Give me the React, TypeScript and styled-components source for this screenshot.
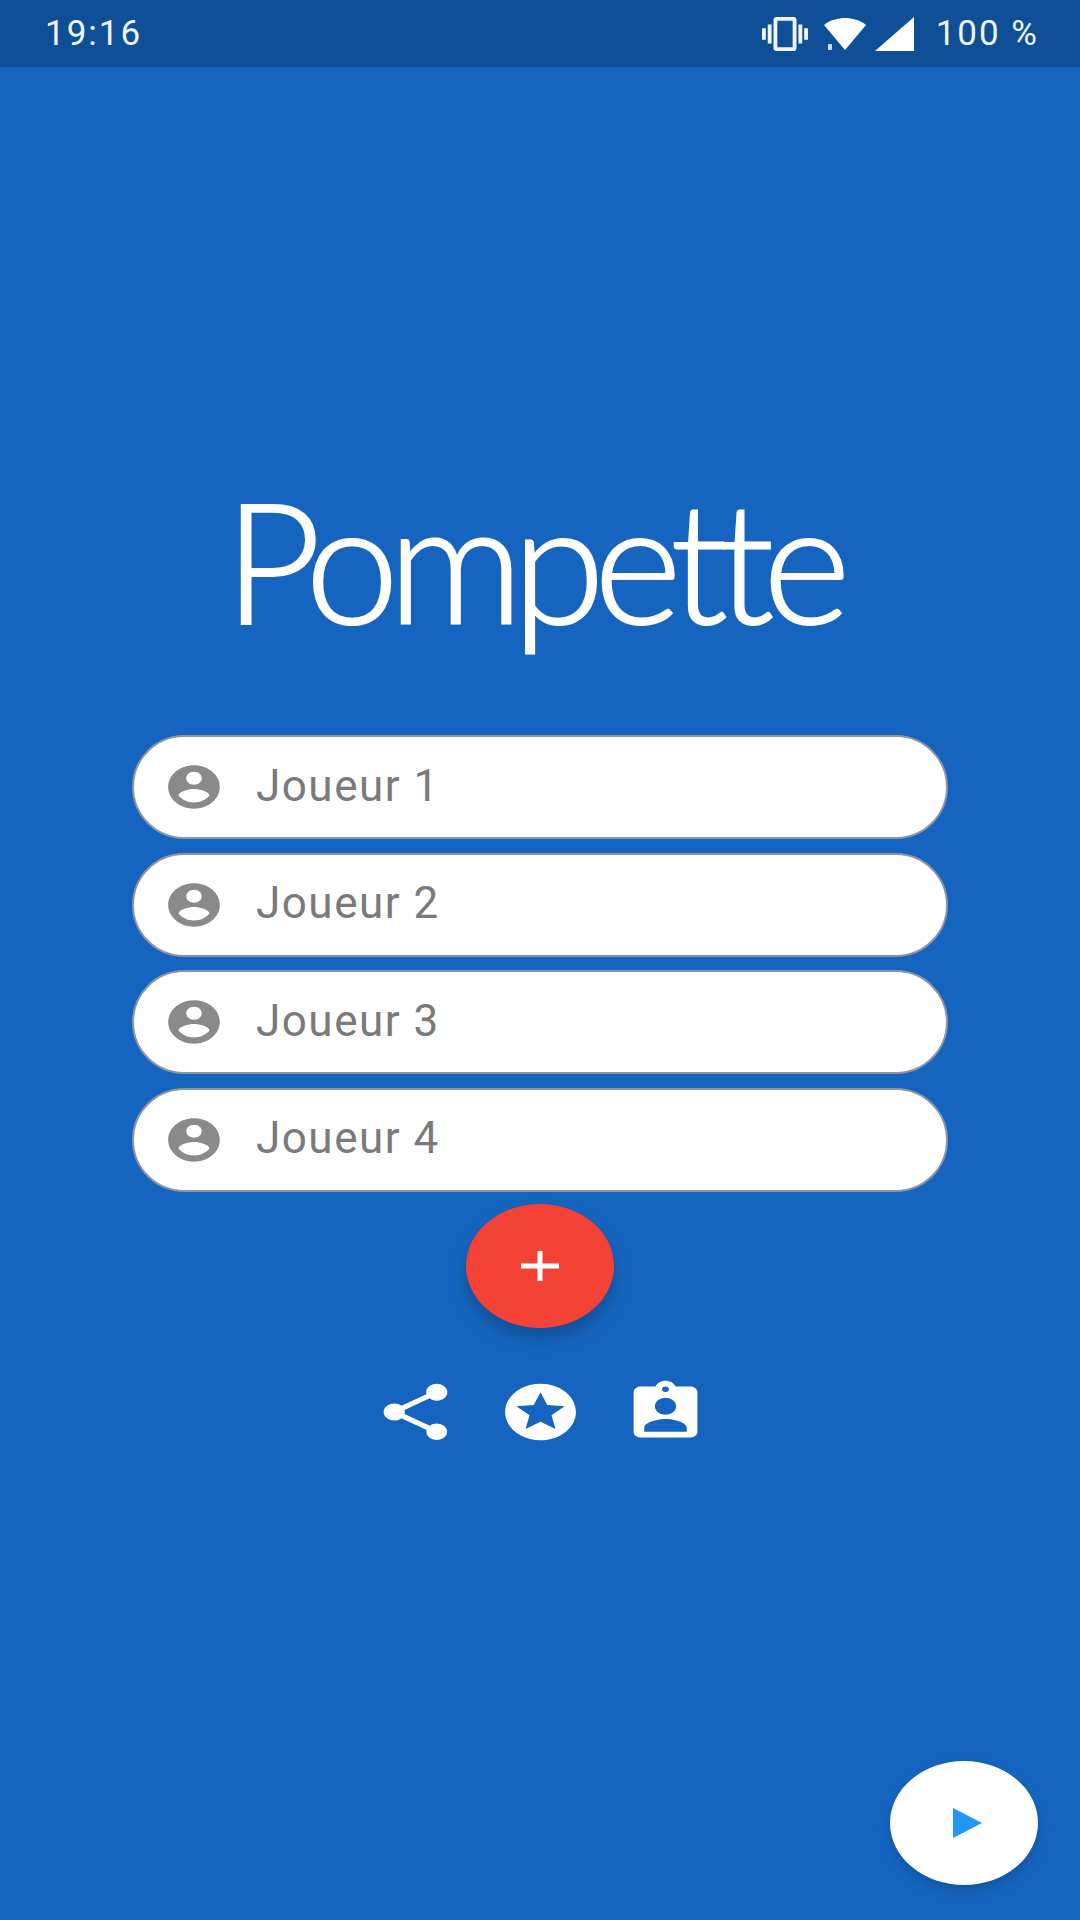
import React from 'react';
import styled, { createGlobalStyle } from 'styled-components';

const GlobalStyle = createGlobalStyle`
  html, body {
    margin: 0;
    padding: 0;
    background: #1565c0;
  }
`;

const players = ['Joueur 1', 'Joueur 2', 'Joueur 3', 'Joueur 4'];

const App = () => (
  <Screen>
    <GlobalStyle />
    <StatusBar>
      <Clock>19:16</Clock>
      <StatusIcons>
        <VibrateIcon viewBox="0 3 24 18" preserveAspectRatio="none">
          <path d="M0 15h2V9H0v6zm3 2h2V7H3v10zm19-8v6h2V9h-2zm-3 8h2V7h-2v10zM16.5 3h-9C6.67 3 6 3.67 6 4.5v15c0 .83.67 1.5 1.5 1.5h9c.83 0 1.5-.67 1.5-1.5v-15c0-.83-.67-1.5-1.5-1.5zM16 19H8V5h8v14z" />
        </VibrateIcon>
        <WifiIcon viewBox="0 0 44 34">
          <path d="M22 33 L1 8 C7 3 15 1 22 1 C29 1 37 3 43 8 Z" />
          <rect x="5" y="27" width="4" height="6" rx="1" fill="#cfe0f2" />
        </WifiIcon>
        <SignalIcon viewBox="0 0 39 34">
          <path d="M39 0 V34 H0 Z" />
        </SignalIcon>
        <Battery>100 %</Battery>
      </StatusIcons>
    </StatusBar>

    <Title>Pompette</Title>

    <PlayerList>
      {players.map((name) => (
        <PlayerField key={name}>
          <AvatarIcon viewBox="0 0 24 24" preserveAspectRatio="none">
            <path d="M12 2C6.48 2 2 6.48 2 12s4.48 10 10 10 10-4.48 10-10S17.52 2 12 2zm0 3c1.66 0 3 1.34 3 3s-1.34 3-3 3-3-1.34-3-3 1.34-3 3-3zm0 14.2c-2.5 0-4.71-1.28-6-3.22.03-1.99 4-3.08 6-3.08 1.99 0 5.97 1.09 6 3.08-1.29 1.94-3.5 3.22-6 3.22z" />
          </AvatarIcon>
          <PlayerName>{name}</PlayerName>
        </PlayerField>
      ))}
    </PlayerList>

    <AddButton>
      <svg width="38" height="30" viewBox="0 0 38 30">
        <path d="M0 15H38M19 0V30" stroke="#fff" strokeWidth="5" fill="none" />
      </svg>
    </AddButton>

    <ActionRow>
      <ActionIcon viewBox="0 0 24 24" preserveAspectRatio="none">
        <path d="M18 16.08c-.76 0-1.44.3-1.96.77L8.91 12.7c.05-.23.09-.46.09-.7s-.04-.47-.09-.7l7.05-4.11c.54.5 1.25.81 2.04.81 1.66 0 3-1.34 3-3s-1.34-3-3-3-3 1.34-3 3c0 .24.04.47.09.7L8.04 9.81C7.5 9.31 6.79 9 6 9c-1.66 0-3 1.34-3 3s1.34 3 3 3c.79 0 1.5-.31 2.04-.81l7.12 4.16c-.05.21-.08.43-.08.65 0 1.61 1.31 2.92 2.92 2.92 1.61 0 2.92-1.31 2.92-2.92s-1.31-2.92-2.92-2.92z" />
      </ActionIcon>
      <ActionIcon viewBox="0 0 24 24" preserveAspectRatio="none">
        <path d="M11.99 2C6.47 2 2 6.48 2 12s4.47 10 9.99 10C17.52 22 22 17.52 22 12S17.52 2 11.99 2zm4.24 16L12 15.45 7.77 18l1.12-4.81-3.73-3.23 4.92-.42L12 5l1.92 4.53 4.92.42-3.73 3.23L16.23 18z" />
      </ActionIcon>
      <ActionIcon viewBox="0 0 24 24" preserveAspectRatio="none">
        <path d="M19 3h-4.18C14.4 1.84 13.3 1 12 1c-1.3 0-2.4.84-2.82 2H5c-1.1 0-2 .9-2 2v14c0 1.1.9 2 2 2h14c1.1 0 2-.9 2-2V5c0-1.1-.9-2-2-2zm-7 0c.55 0 1 .45 1 1s-.45 1-1 1-1-.45-1-1 .45-1 1-1zm0 4c1.66 0 3 1.34 3 3s-1.34 3-3 3-3-1.34-3-3 1.34-3 3-3zm6 12H6v-1.4c0-2 4-3.1 6-3.1s6 1.1 6 3.1V19z" />
      </ActionIcon>
    </ActionRow>

    <PlayButton>
      <svg width="29" height="30" viewBox="0 0 29 30">
        <path d="M0 0L29 15L0 30Z" fill="#2196f3" />
      </svg>
    </PlayButton>
  </Screen>
);

const Screen = styled.div`
  width: 1080px;
  height: 1920px;
  display: flex;
  flex-direction: column;
  align-items: center;
  background: #1565c0;
  overflow: hidden;
`;

const StatusBar = styled.header`
  width: 100%;
  height: 67px;
  box-sizing: border-box;
  padding: 0 41px 0 45px;
  display: flex;
  align-items: center;
  justify-content: space-between;
  background: #0f4f98;
  color: #eef5fb;
  font-family: Roboto, sans-serif;
  font-size: 35px;
  letter-spacing: 2px;
`;

const Clock = styled.span``;

const StatusIcons = styled.div`
  display: flex;
  align-items: center;
`;

const VibrateIcon = styled.svg`
  width: 46px;
  height: 34px;
  fill: #eef5fb;
  margin-right: 15px;
`;

const WifiIcon = styled.svg`
  width: 44px;
  height: 34px;
  fill: #fff;
  margin-right: 8px;
`;

const SignalIcon = styled.svg`
  width: 39px;
  height: 34px;
  fill: #fff;
  margin-right: 22px;
`;

const Battery = styled.span``;

const Title = styled.h1`
  margin: 358px 16px 42px 0;
  height: 268px;
  font-family: Lato, sans-serif;
  font-weight: 300;
  font-size: 168px;
  line-height: 268px;
  color: #fff;
  letter-spacing: -11px;
  -webkit-text-stroke: 2px #fff;
`;

const PlayerList = styled.div`
  display: flex;
  flex-direction: column;
  gap: 13.5px;
`;

const PlayerField = styled.div`
  width: 816px;
  height: 104px;
  box-sizing: border-box;
  padding-left: 29px;
  display: flex;
  align-items: center;
  background: #fff;
  border: 2px solid #8b95a3;
  border-radius: 52px;
`;

const AvatarIcon = styled.svg`
  width: 62px;
  height: 52px;
  fill: #8a8a8a;
  margin-right: 31px;
`;

const PlayerName = styled.span`
  margin-bottom: 3px;
  font-family: Roboto, sans-serif;
  font-size: 44px;
  letter-spacing: 1.5px;
  color: #7a7a7a;
`;

const Fab = styled.div`
  width: 148px;
  height: 124px;
  flex-shrink: 0;
  display: flex;
  align-items: center;
  justify-content: center;
  border-radius: 50%;
`;

const AddButton = styled(Fab)`
  margin-top: 12px;
  background: #f44336;
  box-shadow: 0 10px 16px rgba(0, 0, 0, 0.22);
`;

const ActionRow = styled.div`
  margin-top: 50px;
  display: flex;
  gap: 40px;
`;

const ActionIcon = styled.svg`
  width: 85px;
  height: 68px;
  fill: #fff;
`;

const PlayButton = styled(Fab)`
  align-self: flex-end;
  margin: auto 42px 35px 0;
  padding-left: 7px;
  box-sizing: border-box;
  background: #fff;
  box-shadow: 0 6px 12px rgba(0, 0, 0, 0.16);
`;

export default App;
